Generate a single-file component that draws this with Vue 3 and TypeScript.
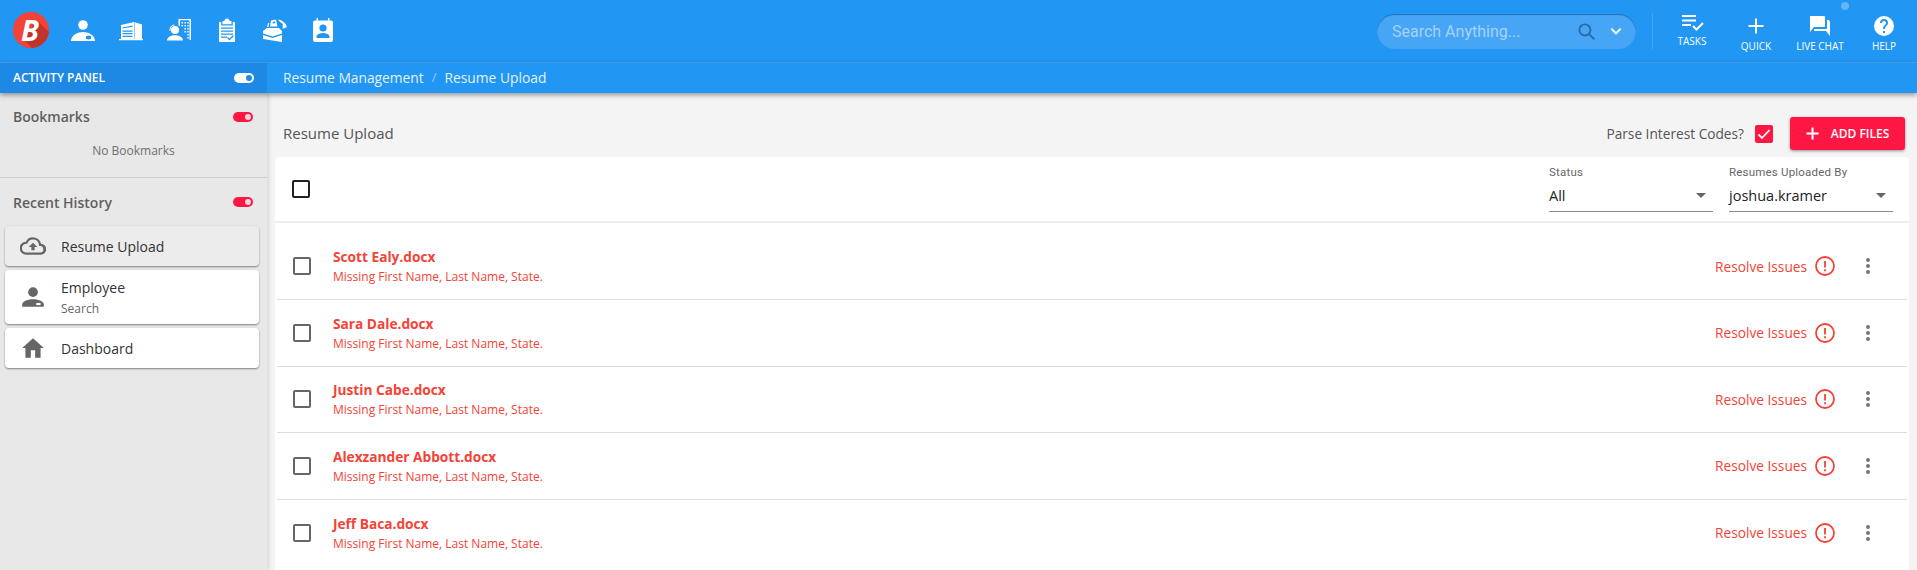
<template>
  <div class="page">
    <header class="topbar">
      <div class="logo">
        <svg viewBox="0 0 36 36"><circle cx="18" cy="18" r="18" fill="#f44336" /><path d="M24 8l11.900 11.900A18 18 0 0 1 19 36l-9-9z" fill="#c0352b" /></svg>
        <span class="logo-b">B</span>
      </div>
      <nav class="nav-icons">
        <svg v-for="icon in navIcons" :key="icon.name" class="nav-icon" viewBox="0 0 24 24" fill="#fff" v-html="icon.body"></svg>
      </nav>
      <div class="top-right">
        <div class="search">
          <span class="search-text">Search Anything...</span>
          <svg class="search-glass" viewBox="0 0 24 24"><circle cx="10" cy="10" r="7" /><path d="M15 15l7 7" /></svg>
          <svg class="search-chevron" viewBox="0 0 24 24"><path d="M5 8.500l7 7 7-7" /></svg>
        </div>
        <div class="divider"></div>
        <div class="action tasks">
          <svg viewBox="0 0 24 24" fill="#fff"><path d="M2 4h14v2H2zM2 8.500h14v2H2zM2 13h9v2H2z" /><path d="M13 15l3.500 3.500L23 12" fill="none" stroke="#fff" stroke-width="2" /></svg>
          <span>TASKS</span>
        </div>
        <div class="action">
          <svg viewBox="0 0 24 24"><path d="M12 4.500v15M4.500 12h15" stroke="#fff" stroke-width="2" /></svg>
          <span>QUICK</span>
        </div>
        <div class="action">
          <span class="chat-dot"></span>
          <svg viewBox="0 0 24 24" fill="#fff"><path d="M20 6h-1v9H6v1c0 .6.4 1 1 1h11l4 5V8c0-1.100-.9-2-2-2zm-3 6V3c0-.6-.4-1-1-1H3c-.6 0-1 .4-1 1v15l4-5h10c.6 0 1-.4 1-1z" /></svg>
          <span>LIVE CHAT</span>
        </div>
        <div class="action">
          <svg viewBox="0 0 24 24" fill="#fff"><path d="M12 2a10 10 0 1 0 0 20 10 10 0 0 0 0-20zm1 17h-2v-2h2v2zm2.100-7.700l-.9.900c-.7.700-1.200 1.300-1.200 2.800h-2v-.5c0-1.100.5-2.100 1.200-2.800l1.200-1.300c.4-.3.600-.8.600-1.400a2 2 0 0 0-4 0H8a4 4 0 0 1 8 0c0 .9-.4 1.700-.9 2.300z" /></svg>
          <span>HELP</span>
        </div>
      </div>
    </header>

    <div class="subbar">
      <div class="panel-head">
        <span>ACTIVITY PANEL</span>
        <span class="toggle toggle-white"></span>
      </div>
      <div class="crumbs">
        <span>Resume Management</span>
        <span class="crumb-sep">/</span>
        <span>Resume Upload</span>
      </div>
    </div>

    <div class="body">
      <aside class="sidebar">
        <section class="bookmarks">
          <div class="side-title"><span>Bookmarks</span><span class="toggle toggle-red"></span></div>
          <div class="no-bookmarks">No Bookmarks</div>
        </section>
        <section class="history">
          <div class="side-title"><span>Recent History</span><span class="toggle toggle-red"></span></div>
          <div class="history-card active">
            <svg class="history-icon" viewBox="0 0 24 24" fill="#666"><path d="M19.400 10A7.500 7.500 0 0 0 5.400 8 6 6 0 0 0 6 20h13a5 5 0 0 0 .4-10zM19 18H6a4 4 0 0 1-.4-8l1-.1.5-.9a5.500 5.500 0 0 1 10.300 1.500l.3 1.500 1.500.1A3 3 0 0 1 19 18zM8 13h2.500v3h3v-3H16l-4-4z" /></svg>
            <div class="history-text">Resume Upload</div>
          </div>
          <div class="history-card employee">
            <svg class="history-icon" viewBox="0 0 24 24" fill="#666"><circle cx="12" cy="7.500" r="4.500" /><path d="M2 21v-2c0-3.500 6-5 10-5s10 1.500 10 5v2z" /><path d="M15 17.500h4v2h-4z" fill="#fff" /></svg>
            <div class="history-text"><div>Employee</div><div class="history-sub">Search</div></div>
          </div>
          <div class="history-card">
            <svg class="history-icon" viewBox="0 0 24 24" fill="#666"><path d="M10 21v-7h4v7h5v-9h3L12 3 2 12h3v9z" /></svg>
            <div class="history-text">Dashboard</div>
          </div>
        </section>
      </aside>

      <main class="main">
        <div class="main-head">
          <div class="main-title">Resume Upload</div>
          <div class="parse">
            <span>Parse Interest Codes?</span>
            <span class="checked"><svg viewBox="0 0 18 18"><path d="M3.500 9.500l3.500 3.500 7.500-8" /></svg></span>
            <button class="add-btn"><svg viewBox="0 0 14 14"><path d="M7 .5v13M.5 7h13" /></svg>ADD FILES</button>
          </div>
        </div>
        <div class="card">
          <div class="card-head">
            <span class="box box-dark"></span>
            <div class="filters">
              <div class="filter">
                <label>Status</label>
                <div class="select"><span>All</span><i class="caret"></i></div>
              </div>
              <div class="filter">
                <label>Resumes Uploaded By</label>
                <div class="select"><span>joshua.kramer</span><i class="caret"></i></div>
              </div>
            </div>
          </div>
          <div class="rows">
            <div v-for="row in rows" :key="row" class="row">
              <span class="box"></span>
              <div class="row-text">
                <div class="file">{{ row }}</div>
                <div class="issue">Missing First Name, Last Name, State.</div>
              </div>
              <div class="resolve">
                <span>Resolve Issues</span>
                <svg class="alert" viewBox="0 0 20 20"><circle cx="10" cy="10" r="9" /><path d="M10 5v6.500M10 13.300v2" /></svg>
              </div>
              <div class="kebab"><i></i><i></i><i></i></div>
            </div>
          </div>
        </div>
      </main>
    </div>
  </div>
</template>

<script setup lang="ts">
const rows: string[] = [
  "Scott Ealy.docx",
  "Sara Dale.docx",
  "Justin Cabe.docx",
  "Alexzander Abbott.docx",
  "Jeff Baca.docx",
];

const navIcons = [
  {
    name: "employee",
    body: '<circle cx="12" cy="7" r="4.800"/><path d="M0 23c0-6 7-9 12-9s12 3 12 9z"/><path d="M15 18h5v3h-5z" fill="#2196f3"/><path d="M16.500 17h2v5h-2z" fill="#2196f3" opacity=".5"/>',
  },
  {
    name: "company",
    body: '<path d="M2 7l13-3 8 2.500V21H2zM0 21h24v1.300H0z"/><path d="M15 4.500h1V21h-1z" fill="#90caf9"/><path d="M3.500 9.500l10-2v1.300l-10 1.700zM3.500 12.500h10v1.300h-10zM3.500 15h10v1.300h-10zM3.500 17.800h10v1.300h-10z" fill="#2196f3"/>',
  },
  {
    name: "contact",
    body: '<circle cx="8" cy="12" r="4"/><path d="M0 22.500c0-3.500 4.500-5.300 8-5.300s8 1.800 8 5.300z"/><path d="M2.500 13a5.500 5.500 0 0 1 5-6.500v1a4.500 4.500 0 0 0-4 5.500z"/><path d="M11.500 1H24v21h-1.500V2.300H13v5.500h-1.500z"/><path d="M14.500 4H16v1.500h-1.500zM17.500 4H19v1.500h-1.500zM20.300 4h1.400v1.500h-1.400zM14.500 7H16v1.500h-1.500zM17.500 7H19v1.500h-1.500zM20.300 7h1.400v1.500h-1.400zM17.500 10H19v1.500h-1.500zM20.300 10h1.400v1.500h-1.400zM17.500 13H19v1.500h-1.500zM20.300 13h1.400v1.500h-1.400zM20.300 16h1.400v1.500h-1.400zM20.300 19h1.400v1.500h-1.400z"/>',
  },
  {
    name: "clipboard",
    body: '<path d="M9.500 3a2.500 2.500 0 0 1 5 0h2v3.300h-9V3zM4.800 4h1.400v3.500h11.600V4h1.400a.8.800 0 0 1 .8.800v18.400a.8.800 0 0 1-.8.800H4.800a.8.800 0 0 1-.8-.8V4.800a.8.800 0 0 1 .8-.8z"/><path d="M6 9.500h12v1.300H6zM6 12.500h12v1.300H6zM6 15.500h12v1.300H6zM6 18.500h6v1.300H6z" fill="#2196f3"/><path d="M12.500 19.500l2 2 4-4" fill="none" stroke="#2196f3" stroke-width="1.300"/>',
  },
  {
    name: "briefcase",
    body: '<path d="M0 13l4-3h12l3 3v2.500L9.500 18.500 0 15.500zM0 17l9.500 3 9.500-3v7l-9.500-1.500L0 21z"/><path d="M4 9l1-4 1.300.3-1 3.700zM7 8.500L8 2.500l5-.9 1.500 6.900zM15 1.500c4 .5 7.500 3 9 7.500l-3.500 1.500-.8-.1V6l-3-2.500z"/><path d="M9.500 4l2.500-.5.300 1.500-2.500.5z" fill="#2196f3"/>',
  },
  {
    name: "calendar",
    body: '<path d="M5.500 0h1.500v2.500h10V0h1.500v2.500h1.500a2 2 0 0 1 2 2V22a2 2 0 0 1-2 2H4a2 2 0 0 1-2-2V4.500a2 2 0 0 1 2-2h1.500z"/><circle cx="12" cy="10" r="3.600" fill="#2196f3"/><path d="M5.500 20v-1.500c0-2.500 4.500-3.500 6.500-3.500s6.500 1 6.500 3.500V20z" fill="#2196f3"/>',
  },
];
</script>

<style>
html,
body {
  margin: 0;
  background: #f4f4f4;
  overflow: hidden;
}
</style>

<style scoped>
.page {
  width: 1917px;
  height: 570px;
  overflow: hidden;
  font-family: "Open Sans", "Noto Sans", sans-serif;
  color: #444;
  display: flex;
  flex-direction: column;
}

.topbar {
  height: 62px;
  flex: none;
  background: #2196f3;
  border-bottom: 1px solid #42a5f5;
  display: flex;
  align-items: center;
  padding-left: 13px;
}

.logo {
  width: 36px;
  height: 36px;
  position: relative;
  margin-bottom: 2px;
  display: flex;
  align-items: center;
  justify-content: center;
}

.logo svg {
  position: absolute;
  inset: 0;
}

.logo-b {
  position: relative;
  color: #fff;
  font: italic 700 29px "Open Sans", sans-serif;
  line-height: 36px;
  margin-left: -2px;
}

.nav-icons {
  display: flex;
  align-items: center;
  gap: 24px;
  margin-left: 22px;
  margin-bottom: 2px;
}

.nav-icon {
  width: 24px;
  height: 24px;
  display: block;
}

.top-right {
  margin-left: auto;
  display: flex;
  align-items: center;
  height: 62px;
  margin-right: 1px;
}

.search {
  width: 259px;
  height: 35px;
  box-sizing: border-box;
  border-radius: 18px;
  background: #47a5f5;
  box-shadow: inset 0 1px 1px rgba(0, 60, 120, 0.5);
  display: flex;
  align-items: center;
  padding: 0 12px 0 15px;
}

.search-text {
  flex: 1;
  font: 16px Roboto, sans-serif;
  color: #a5d3fa;
}

.search-glass {
  width: 19px;
  height: 19px;
  fill: none;
  stroke: #2a6ba5;
  stroke-width: 2.400;
  margin-right: 12px;
}

.search-chevron {
  width: 16px;
  height: 16px;
  fill: none;
  stroke: #fff;
  stroke-width: 3;
}

.divider {
  width: 1px;
  height: 36px;
  background: #42a5f5;
  margin: 0 7px 0 16px;
}

.action {
  position: relative;
  width: 64px;
  height: 62px;
  box-sizing: border-box;
  padding-top: 14px;
  display: flex;
  flex-direction: column;
  align-items: center;
  color: #fff;
  font-size: 10px;
  line-height: 14px;
}

.action svg {
  width: 24px;
  height: 24px;
  display: block;
  margin-bottom: 1px;
}

.action.tasks {
  padding-top: 11px;
}

.action.tasks svg {
  margin-bottom: -1px;
}

.chat-dot {
  position: absolute;
  top: 2px;
  right: 3px;
  width: 8px;
  height: 8px;
  border-radius: 50%;
  background: #64b5f6;
}

.subbar {
  height: 30px;
  flex: none;
  display: flex;
  background: #2196f3;
  color: #fff;
  box-shadow: 0 2px 5px rgba(0, 0, 0, 0.4);
  position: relative;
  z-index: 2;
}

.panel-head {
  width: 267px;
  box-sizing: border-box;
  background: #1e88e5;
  display: flex;
  align-items: center;
  justify-content: space-between;
  padding: 0 13px 1px;
  font-size: 12px;
  font-weight: 600;
}

.toggle {
  width: 20px;
  height: 10px;
  border-radius: 5px;
  position: relative;
  display: block;
}

.toggle::after {
  content: "";
  position: absolute;
  right: 2px;
  top: 2px;
  width: 6px;
  height: 6px;
  border-radius: 50%;
}

.toggle-white {
  background: #fff;
}

.toggle-white::after {
  background: #1e88e5;
}

.toggle-red {
  background: #ff1744;
}

.toggle-red::after {
  background: #f5d5da;
}

.crumbs {
  display: flex;
  align-items: center;
  gap: 8px;
  padding: 0 0 2px 16px;
  font-size: 13.800px;
  color: #e3f2fd;
}

.crumb-sep {
  color: #90caf9;
  font-size: 13px;
}

.body {
  flex: 1;
  display: flex;
  min-height: 0;
}

.sidebar {
  width: 267px;
  flex: none;
  background: #e8e8e8;
  box-shadow: 2px 0 4px rgba(0, 0, 0, 0.12);
  position: relative;
  z-index: 1;
}

.bookmarks {
  height: 84px;
  border-bottom: 1px solid #ccc;
}

.side-title {
  display: flex;
  align-items: center;
  justify-content: space-between;
  padding: 14px 14px 0 13px;
  height: 20px;
  font-size: 14px;
  font-weight: 600;
  color: #5f5f5f;
}

.bookmarks .side-title {
  padding-top: 13px;
  padding-bottom: 1px;
}

.bookmarks .toggle {
  margin-top: 2px;
}

.no-bookmarks {
  margin-top: 15px;
  text-align: center;
  font-size: 12px;
  color: #6f6f6f;
}

.history-card {
  width: 254px;
  margin: 0 0 4px 5px;
  height: 40px;
  background: #fff;
  border-radius: 4px;
  box-shadow: 0 1px 2px rgba(0, 0, 0, 0.45);
  display: flex;
  align-items: center;
  font-size: 14px;
  color: #333;
}

.history-card.active {
  margin-top: 14px;
  background: #ececec;
}

.history-card.employee {
  height: 54px;
}

.history-icon {
  width: 26px;
  height: 26px;
  margin: 0 15px 0 15px;
  flex: none;
}

.history-sub {
  font-size: 12px;
  color: #666;
  margin-top: 4px;
  line-height: 16px;
}

.main {
  flex: 1;
  background: #f4f4f4;
  padding: 0 8px;
  min-width: 0;
  display: flex;
  flex-direction: column;
}

.main-head {
  height: 64px;
  flex: none;
  display: flex;
  align-items: center;
  justify-content: space-between;
  padding: 17px 0 0 8px;
  box-sizing: border-box;
}

.main-title {
  font-size: 15px;
  color: #555;
  margin-top: -2px;
}

.parse {
  display: flex;
  align-items: center;
  font-size: 13.700px;
  color: #555;
  margin-right: 4px;
}

.checked {
  width: 18px;
  height: 18px;
  margin-left: 11px;
  border-radius: 2px;
  background: #ff1744;
}

.checked svg {
  display: block;
  fill: none;
  stroke: #fff;
  stroke-width: 1.800;
}

.add-btn {
  margin-left: 17px;
  width: 115px;
  height: 33px;
  border: 0;
  border-radius: 3px;
  background: #ff1744;
  color: #fff;
  font: 600 12px "Open Sans", sans-serif;
  box-shadow: 0 1px 3px rgba(0, 0, 0, 0.4);
  display: flex;
  align-items: center;
  justify-content: center;
  gap: 12px;
  padding: 0;
}

.add-btn svg {
  width: 13px;
  height: 13px;
  fill: none;
  stroke: #fff;
  stroke-width: 2.200;
}

.card {
  flex: 1;
  background: #fff;
  border-radius: 4px 4px 0 0;
}

.card-head {
  height: 64px;
  border-bottom: 2px solid #eee;
  display: flex;
  align-items: center;
  padding-left: 17px;
}

.box {
  width: 14px;
  height: 14px;
  border: 2px solid #666;
  border-radius: 2px;
  flex: none;
}

.box-dark {
  border-color: #222;
}

.filters {
  margin-left: auto;
  display: flex;
  gap: 16px;
  padding-right: 16px;
}

.filter {
  width: 164px;
}

.filter label {
  display: block;
  font: 11.500px Roboto, sans-serif;
  letter-spacing: 0.2px;
  color: #666;
  line-height: 14px;
  margin-top: -1px;
}

.select {
  display: flex;
  align-items: center;
  justify-content: space-between;
  height: 32px;
  border-bottom: 1px solid #8a8a8a;
  font-size: 14.500px;
  color: #222;
  padding-right: 7px;
}

.caret {
  width: 0;
  height: 0;
  border-left: 5px solid transparent;
  border-right: 5px solid transparent;
  border-top: 5px solid #666;
}

.rows {
  padding-top: 10.500px;
}

.row {
  height: 66.500px;
  margin: 0 2px;
  border-bottom: 1px solid #ddd;
  display: flex;
  align-items: center;
  padding-left: 16px;
  box-sizing: border-box;
}

.row:last-child {
  border-bottom: 0;
}

.row-text {
  margin-left: 22px;
}

.file {
  font-size: 13.700px;
  font-weight: 700;
  color: #f44336;
  line-height: 20px;
}

.issue {
  font-size: 12px;
  color: #f44336;
  line-height: 16px;
  margin-top: 2px;
}

.resolve {
  margin-left: auto;
  display: flex;
  align-items: center;
  gap: 8px;
  font-size: 13.700px;
  color: #f44336;
}

.alert {
  width: 20px;
  height: 20px;
  fill: none;
  stroke: #f44336;
  stroke-width: 1.800;
}

.kebab {
  width: 4px;
  margin: 0 37px 0 31px;
  display: flex;
  flex-direction: column;
  gap: 2px;
}

.kebab i {
  width: 4px;
  height: 4px;
  border-radius: 50%;
  background: #777;
}
</style>
